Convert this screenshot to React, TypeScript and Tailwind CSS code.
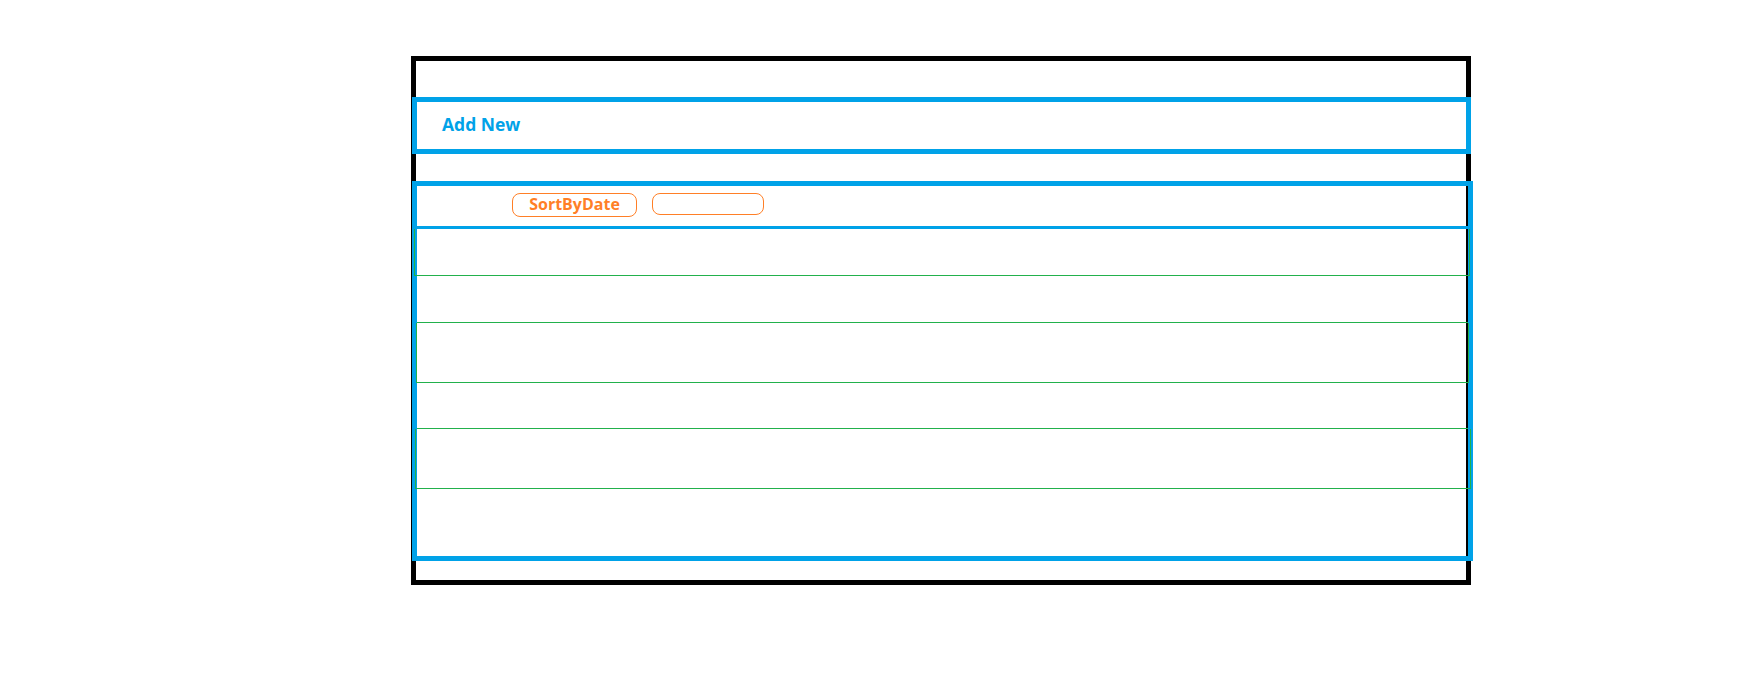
import React from 'react';

// wireframe: list page with "Add New" bar and a sortable list of rows
const rows = [
  { id: 1, className: 'h-[47px] border-b border-x -ml-[3px] -mr-[2px]' },
  { id: 2, className: 'h-[47px] border-b' },
  { id: 3, className: 'h-[60px] border-b border-x -ml-[1px] -mr-[1px]' },
  { id: 4, className: 'h-[46px] border-b' },
  { id: 5, className: 'h-[60px] border-b border-x -ml-[2px] -mr-[3px]' },
  { id: 6, className: 'flex-1' },
];

export default function App() {
  return (
    <div className="min-h-screen w-[1749px] bg-white pl-[411px] pt-[56px] font-['Open_Sans',sans-serif]">
      <div className="flex h-[529px] w-[1060px] flex-col border-[5px] border-black">
        {/* add new bar */}
        <div className="-ml-[4px] mt-[36px] flex h-[57px] w-[1059px] items-center border-[5px] border-[#00a2e8] pb-[3px] pl-[25px]">
          <span className="text-[17.5px] font-bold text-[#00a2e8]">Add New</span>
        </div>

        {/* list */}
        <div className="-ml-[4px] mt-[27px] flex h-[380px] w-[1061px] flex-col border-[5px] border-[#00a2e8]">
          <div className="flex h-[40px] items-start gap-[15px] pl-[95px] pt-[7px]">
            <button className="flex h-[24px] w-[125px] items-center justify-center rounded-[8px] border border-[#ff7f27] pb-[2px] text-[16px] font-bold text-[#ff7f27]">
              SortByDate
            </button>
            <button className="h-[22px] w-[112px] rounded-[8px] border border-[#ff7f27]" />
          </div>
          <div className="h-[3px] bg-[#00a2e8]" />
          <div className="flex flex-1 flex-col">
            {rows.map((row) => (
              <div key={row.id} className={`border-[#22b14c] ${row.className}`} />
            ))}
          </div>
        </div>
      </div>
    </div>
  );
}
